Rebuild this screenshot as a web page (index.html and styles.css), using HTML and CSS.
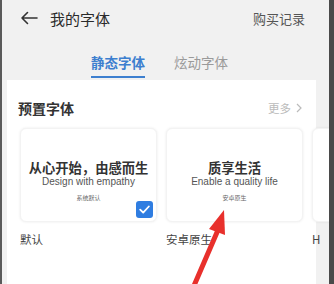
FILE: index.html
```html
<!DOCTYPE html>
<html lang="zh-CN">
<head>
  <meta charset="UTF-8">
  <meta name="viewport" content="width=device-width, initial-scale=1.0">
  <title>我的字体</title>
  <link rel="stylesheet" href="styles.css">
</head>
<body>
  <div class="frame">
    <div class="edge-left"></div>
    <div class="screen">
      <div class="topbar">
        <svg class="back" width="18" height="14" viewBox="0 0 18 14">
          <path d="M17 7H2M7.5 1.5L2 7l5.5 5.5" fill="none" stroke="#333" stroke-width="1.6" stroke-linecap="round" stroke-linejoin="round"/>
        </svg>
        <span class="title">我的字体</span>
        <span class="records">购买记录</span>
      </div>

      <div class="tabs">
        <div class="tab active">静态字体</div>
        <div class="tab">炫动字体</div>
      </div>

      <div class="panel">
        <div class="section-head">
          <span class="section-title">预置字体</span>
          <span class="more">更多
            <svg width="6" height="10" viewBox="0 0 6 10"><path d="M1 1l4 4-4 4" fill="none" stroke="#bbb" stroke-width="1.2"/></svg>
          </span>
        </div>

        <div class="fonts">
          <div class="font-item">
            <div class="card">
              <div class="sample-cn">从心开始，由感而生</div>
              <div class="sample-en">Design with empathy</div>
              <div class="sample-name">系统默认</div>
              <div class="check">
                <svg width="11" height="9" viewBox="0 0 11 9"><path d="M1.2 4.6l3 3L9.8 1.5" fill="none" stroke="#fff" stroke-width="1.8" stroke-linecap="round" stroke-linejoin="round"/></svg>
              </div>
            </div>
            <div class="label">默认</div>
          </div>
          <div class="font-item">
            <div class="card">
              <div class="sample-cn">质享生活</div>
              <div class="sample-en">Enable a quality life</div>
              <div class="sample-name">安卓原生</div>
            </div>
            <div class="label">安卓原生</div>
          </div>
          <div class="font-item partial">
            <div class="card"></div>
            <div class="label">H</div>
          </div>
        </div>
      </div>

      <svg class="arrow" width="60" height="80" viewBox="0 0 60 80">
        <path d="M7 80L32 22" stroke="#e8302c" stroke-width="5" stroke-linecap="round"/>
        <path d="M38 2L23 21 L39 27Z" fill="#e8302c"/>
      </svg>
    </div>
    <div class="edge-right"></div>
  </div>
</body>
</html>
```

FILE: styles.css
```css
html, body {
  margin: 0;
  padding: 0;
}

body {
  width: 334px;
  height: 284px;
  overflow: hidden;
  font-family: "Noto Sans CJK SC", "Noto Sans", sans-serif;
  background-color: #f1f1f1;
}

.frame {
  display: flex;
  height: 284px;
}

.edge-left {
  width: 2px;
  background-color: #5a5a5a;
}

.edge-right {
  width: 5px;
  background-color: #4a4a4a;
}

.screen {
  flex: 1;
  position: relative;
  display: flex;
  flex-direction: column;
  background-color: #f1f1f1;
  overflow: hidden;
}

.topbar {
  display: flex;
  align-items: center;
  height: 36px;
  padding: 0 0 0 18px;
}

.back {
  margin-right: 12px;
}

.title {
  font-size: 15px;
  color: #2a2a2a;
  flex: 1;
}

.records {
  font-size: 13px;
  color: #555;
  margin-right: 24px;
}

.tabs {
  display: flex;
  justify-content: center;
  align-items: flex-start;
  gap: 29px;
  height: 44px;
  padding-top: 16px;
  padding-right: 12px;
  box-sizing: border-box;
}

.tab {
  font-size: 13.5px;
  color: #9a9a9a;
  line-height: 20px;
  padding-bottom: 4px;
}

.tab.active {
  color: #3d7fcf;
  font-weight: bold;
  border-bottom: 2.5px solid #3d7fcf;
}

.panel {
  flex: 1;
  background-color: #fff;
  margin-left: 5px;
  margin-right: 13px;
  padding: 0 0 0 11px;
}

.section-head {
  display: flex;
  align-items: center;
  justify-content: space-between;
  height: 40px;
  padding-top: 8px;
  padding-right: 14px;
}

.section-title {
  font-size: 14px;
  font-weight: bold;
  color: #333;
}

.more {
  font-size: 11.5px;
  color: #bbb;
  display: flex;
  align-items: center;
  gap: 5px;
}

.fonts {
  display: flex;
  gap: 9px;
  margin-left: 2px;
}

.font-item {
  width: 137px;
  flex-shrink: 0;
}

.card {
  height: 94px;
  border-radius: 6px;
  background-color: #fff;
  box-shadow: 0 0 3px rgba(0, 0, 0, 0.08);
  border: 1px solid #f3f3f3;
  box-sizing: border-box;
  position: relative;
  text-align: center;
  padding-top: 30px;
}

.sample-cn {
  font-size: 13.3px;
  font-weight: bold;
  color: #333;
  line-height: 18px;
}

.sample-en {
  font-family: "Liberation Sans", Arial, sans-serif;
  font-size: 10px;
  color: #555;
  line-height: 12px;
  margin-top: -1px;
}

.sample-name {
  font-size: 6px;
  color: #666;
  line-height: 10px;
  margin-top: 5px;
}

.check {
  position: absolute;
  right: 3px;
  bottom: 3px;
  width: 17px;
  height: 17px;
  border-radius: 3px;
  background-color: #2f7de1;
  display: flex;
  align-items: center;
  justify-content: center;
}

.label {
  font-size: 11.5px;
  color: #444;
  line-height: 16px;
  margin-top: 9px;
}

.arrow {
  position: absolute;
  left: 184px;
  top: 208px;
}
```
